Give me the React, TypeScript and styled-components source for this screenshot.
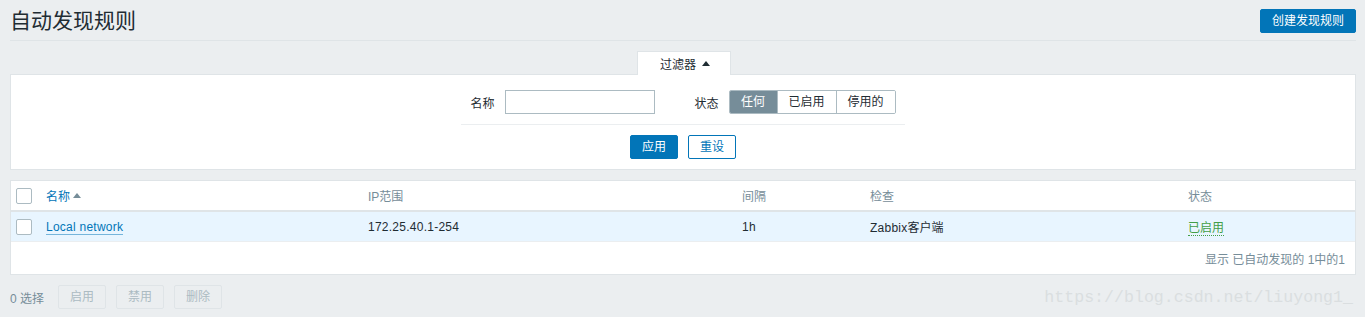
import React from 'react';
import styled, { createGlobalStyle } from 'styled-components';

const GlobalStyle = createGlobalStyle`
  html, body {
    margin: 0;
    padding: 0;
    background: #ebeef0;
  }
  body {
    font-family: "Liberation Sans", Arial, "Noto Sans CJK SC", sans-serif;
    font-size: 12px;
    color: #1f2c33;
  }
`;

const Page = styled.div`
  padding: 0 9px 0 10px;
`;

const Header = styled.div`
  display: flex;
  justify-content: space-between;
  align-items: center;
  height: 40px;
  border-bottom: 1px solid #dfe4e7;
`;

const Title = styled.h1`
  margin: 0;
  font-size: 21px;
  font-weight: normal;
  color: #1f2c33;
  line-height: 24px;
  padding-top: 1px;
`;

const Button = styled.button<{ $variant?: 'primary' | 'outline' | 'disabled' }>`
  height: 24px;
  padding: 0 11px;
  border-radius: 2px;
  font-family: inherit;
  font-size: 12px;
  line-height: 22px;
  cursor: pointer;
  border: 1px solid
    ${p => (p.$variant === 'disabled' ? '#dfe4e7' : '#0275b8')};
  background: ${p =>
    p.$variant === 'primary' ? '#0275b8' : p.$variant === 'disabled' ? '#ebeef0' : '#ffffff'};
  color: ${p =>
    p.$variant === 'primary' ? '#ffffff' : p.$variant === 'disabled' ? '#acbbc2' : '#0275b8'};
`;

const CreateButton = styled(Button)`
  width: 96px;
  margin-top: 1px;
`;

const FilterWrap = styled.div`
  margin-top: 10px;
  display: flex;
  flex-direction: column;
  align-items: center;
`;

const FilterTab = styled.div`
  width: 89px;
  height: 23px;
  margin-bottom: -1px;
  margin-left: 1px;
  background: #ffffff;
  border: 1px solid #dfe4e7;
  border-bottom: none;
  display: flex;
  align-items: center;
  justify-content: center;
  gap: 6px;
  padding-left: 3px;
  position: relative;
  z-index: 1;
  font-size: 12px;
  color: #1f2c33;
`;

const TriangleUp = styled.span<{ $color?: string; $size?: number }>`
  display: inline-block;
  width: 0;
  height: 0;
  border-left: ${p => p.$size ?? 4}px solid transparent;
  border-right: ${p => p.$size ?? 4}px solid transparent;
  border-bottom: ${p => (p.$size ?? 4) + 1}px solid ${p => p.$color ?? '#1f2c33'};
`;

const Panel = styled.div`
  align-self: stretch;
  background: #ffffff;
  border: 1px solid #dfe4e7;
`;

const FilterBody = styled.div`
  display: flex;
  flex-direction: column;
  align-items: center;
  padding: 15px 0 10px;
`;

const FilterRow = styled.div`
  display: flex;
  align-items: center;
  width: 444px;
  justify-content: center;
  padding-bottom: 10px;
  border-bottom: 1px solid #ebeef0;
`;

const Field = styled.div`
  display: flex;
  align-items: center;
  gap: 10px;
  & + & {
    margin-left: 40px;
  }
`;

const Label = styled.label`
  color: #1f2c33;
`;

const TextInput = styled.input`
  box-sizing: border-box;
  width: 150px;
  height: 24px;
  border: 1px solid #acbbc2;
  border-radius: 0;
  padding: 0 5px;
  background: #ffffff;
  font-family: inherit;
  font-size: 12px;
`;

const Segmented = styled.div`
  display: flex;
  border: 1px solid #acbbc2;
  border-radius: 2px;
  overflow: hidden;
`;

const Segment = styled.div<{ $active?: boolean; $w: number }>`
  box-sizing: border-box;
  width: ${p => p.$w}px;
  height: 22px;
  line-height: 22px;
  text-align: center;
  background: ${p => (p.$active ? '#768d99' : '#ffffff')};
  color: ${p => (p.$active ? '#ffffff' : '#1f2c33')};
  & + & {
    border-left: 1px solid #acbbc2;
  }
`;

const FilterButtons = styled.div`
  display: flex;
  gap: 10px;
  margin-top: 10px;
`;

const TablePanel = styled(Panel)`
  margin-top: 10px;
`;

const Table = styled.table`
  width: 100%;
  border-collapse: collapse;
`;

const Th = styled.th<{ $w?: number }>`
  text-align: left;
  font-weight: normal;
  color: #768d99;
  height: 29px;
  padding: 0 5px;
  border-bottom: 2px solid #dfe4e7;
  width: ${p => (p.$w ? `${p.$w}px` : 'auto')};
  white-space: nowrap;
`;

const SortLink = styled.span`
  color: #0275b8;
  display: inline-flex;
  align-items: center;
  gap: 3px;
`;

const Tr = styled.tr<{ $hl?: boolean }>`
  background: ${p => (p.$hl ? '#e8f5ff' : 'transparent')};
`;

const Td = styled.td`
  height: 29px;
  padding: 0 5px;
  border-bottom: 1px solid #ebeef0;
  color: #1f2c33;
  white-space: nowrap;
`;

const Checkbox = styled.span`
  display: inline-block;
  box-sizing: border-box;
  width: 16px;
  height: 16px;
  border: 1px solid #acbbc2;
  border-radius: 2px;
  background: #ffffff;
  vertical-align: middle;
`;

const Link = styled.a`
  color: #0275b8;
  text-decoration: none;
  border-bottom: 1px solid rgba(2, 117, 184, 0.5);
`;

const StatusLink = styled.a`
  color: #429e47;
  text-decoration: none;
  border-bottom: 1px dotted #429e47;
`;

const Latin = styled.span`
  letter-spacing: 0.25px;
`;

const TableFooter = styled.div`
  height: 32px;
  display: flex;
  align-items: center;
  justify-content: flex-end;
  padding-right: 10px;
  color: #768d99;
`;

const BottomBar = styled.div`
  display: flex;
  align-items: center;
  margin-top: 10px;
  gap: 10px;
  height: 24px;
`;

const Selected = styled.span`
  color: #768d99;
  margin-right: 4px;
`;

const ActionButton = styled(Button)`
  width: 48px;
  padding: 0;
`;

const Watermark = styled.span`
  margin-left: auto;
  margin-right: 3px;
  font-family: "Liberation Mono", "Courier New", monospace;
  font-size: 16.6px;
  color: #dadee0;
`;

export default function App() {
  return (
    <>
      <GlobalStyle />
      <Page>
        <Header>
          <Title>自动发现规则</Title>
          <CreateButton $variant="primary">创建发现规则</CreateButton>
        </Header>

        <FilterWrap>
          <FilterTab>
            过滤器 <TriangleUp />
          </FilterTab>
          <Panel>
            <FilterBody>
              <FilterRow>
                <Field>
                  <Label>名称</Label>
                  <TextInput />
                </Field>
                <Field>
                  <Label>状态</Label>
                  <Segmented>
                    <Segment $w={47} $active>任何</Segment>
                    <Segment $w={59}>已启用</Segment>
                    <Segment $w={59}>停用的</Segment>
                  </Segmented>
                </Field>
              </FilterRow>
              <FilterButtons>
                <ActionButton $variant="primary">应用</ActionButton>
                <ActionButton $variant="outline">重设</ActionButton>
              </FilterButtons>
            </FilterBody>
          </Panel>
        </FilterWrap>

        <TablePanel>
          <Table>
            <thead>
              <tr>
                <Th $w={20}>
                  <Checkbox />
                </Th>
                <Th $w={312}>
                  <SortLink>
                    名称 <TriangleUp $color="#768d99" />
                  </SortLink>
                </Th>
                <Th $w={364}>IP范围</Th>
                <Th $w={118}>间隔</Th>
                <Th $w={308}>检查</Th>
                <Th>状态</Th>
              </tr>
            </thead>
            <tbody>
              <Tr $hl>
                <Td>
                  <Checkbox />
                </Td>
                <Td>
                  <Link href="#">
                    <Latin>Local network</Latin>
                  </Link>
                </Td>
                <Td>
                  <Latin>172.25.40.1-254</Latin>
                </Td>
                <Td>
                  <Latin>1h</Latin>
                </Td>
                <Td>
                  <Latin>Zabbix</Latin>客户端
                </Td>
                <Td>
                  <StatusLink href="#">已启用</StatusLink>
                </Td>
              </Tr>
            </tbody>
          </Table>
          <TableFooter>显示 已自动发现的 1中的1</TableFooter>
        </TablePanel>

        <BottomBar>
          <Selected>0 选择</Selected>
          <ActionButton $variant="disabled">启用</ActionButton>
          <ActionButton $variant="disabled">禁用</ActionButton>
          <ActionButton $variant="disabled">删除</ActionButton>
          <Watermark>https://blog.csdn.net/liuyong1_</Watermark>
        </BottomBar>
      </Page>
    </>
  );
}
